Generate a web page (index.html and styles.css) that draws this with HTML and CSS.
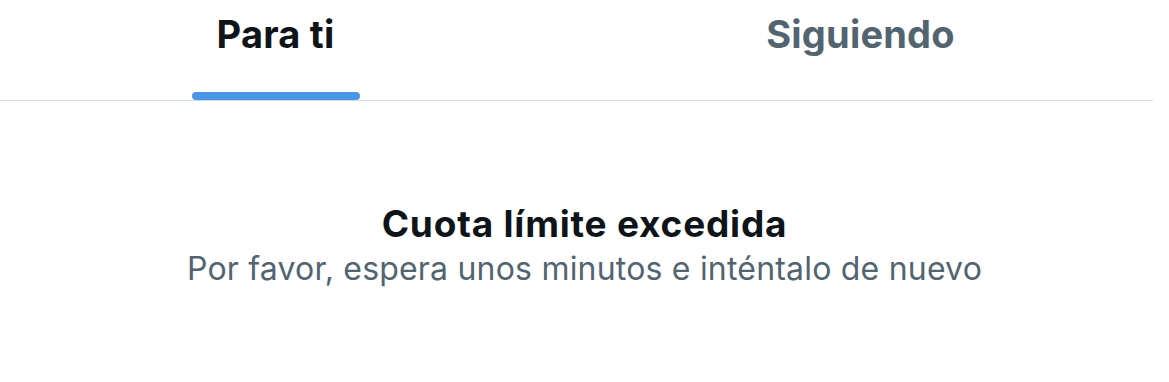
FILE: index.html
```html
<!DOCTYPE html>
<html lang="es">
<head>
    <meta charset="UTF-8">
    <meta name="viewport" content="width=device-width, initial-scale=1.0">
    <title>Inicio</title>
    <link rel="stylesheet" href="styles.css">
</head>
<body>
    <nav class="tabs">
        <div class="tab active">
            <span class="tab-label">Para ti</span>
            <span class="tab-indicator"></span>
        </div>
        <div class="tab">
            <span class="tab-label">Siguiendo</span>
            <span class="tab-indicator"></span>
        </div>
    </nav>

    <main class="message">
        <h2 class="message-title">Cuota límite excedida</h2>
        <p class="message-text">Por favor, espera unos minutos e inténtalo de nuevo</p>
    </main>
</body>
</html>
```

FILE: styles.css
```css
body {
    font-family: Inter, 'Noto Sans', sans-serif;
    margin: 0;
    background-color: #fff;
    color: #0f1419;
    overflow: hidden;
}

.tabs {
    display: flex;
    width: 1170px;
    margin-left: -17px;
    height: 100px;
    border-bottom: 1px solid #cfd9de;
}

.tab {
    flex: 1;
    display: flex;
    flex-direction: column;
    align-items: center;
    padding-top: 12px;
}

.tab-label {
    font-size: 38px;
    line-height: 44px;
    font-weight: 700;
    color: #536471;
    letter-spacing: 0.2px;
}

.tab.active .tab-label {
    color: #0f1419;
}

.tab-indicator {
    margin-top: 36px;
    width: 168px;
    height: 8px;
    border-radius: 4px;
}

.tab.active .tab-indicator {
    background-color: #4a96e6;
}

.message {
    padding-top: 103px;
    text-align: center;
}

.message-title {
    margin: 0;
    font-size: 37px;
    line-height: 40px;
    font-weight: 700;
    letter-spacing: 0.8px;
}

.message-text {
    margin: 5px 0 0;
    font-size: 32px;
    line-height: 40px;
    color: #536471;
    letter-spacing: 0.2px;
}
```
